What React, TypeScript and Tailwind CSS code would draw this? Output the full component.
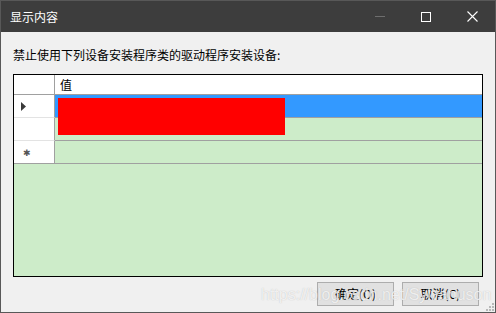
import React from "react";

const font = "font-['Microsoft_YaHei','Noto_Sans_CJK_SC',sans-serif]";

function TitleBar() {
    return (
        <div className="h-[31px] flex items-center pl-[9px] text-white text-[12px] shrink-0">
            <span className="flex-1">显示内容</span>
            <div className="flex items-center h-full">
                <div className="w-[46px] h-full flex items-center justify-center">
                    <div className="w-[10px] h-px bg-[#6e6e6e]" />
                </div>
                <div className="w-[46px] h-full flex items-center justify-center">
                    <div className="w-[10px] h-[10px] border border-white" />
                </div>
                <div className="w-[46px] h-full flex items-center justify-center">
                    <svg width="11" height="11" viewBox="0 0 11 11">
                        <path d="M0.5 0.5 L10.5 10.5 M10.5 0.5 L0.5 10.5" stroke="#ffffff" strokeWidth="1.1" />
                    </svg>
                </div>
            </div>
        </div>
    );
}

function RowHead({ children, last }: { children?: React.ReactNode; last?: boolean }) {
    return (
        <div className={`w-[41px] h-[23px] shrink-0 bg-white border-r border-[#a0a0a0] flex items-center ${last ? "border-b border-b-[#a0a0a0]" : "border-b border-b-[#e3e3e3]"}`}>
            {children}
        </div>
    );
}

function Grid() {
    return (
        <div className="relative flex-1 border border-black bg-[#cdecc9] flex flex-col">
            <div className="flex h-[20px] bg-white border-b border-[#a0a0a0]">
                <div className="w-[41px] border-r border-[#a0a0a0]" />
                <div className="flex-1 pl-[5px] flex items-center text-black">值</div>
            </div>
            <div className="flex">
                <RowHead>
                    <svg width="6" height="9" viewBox="0 0 6 9" className="ml-[7px]">
                        <path d="M0 0 L5 4.5 L0 9 Z" fill="#3a3a3a" />
                    </svg>
                </RowHead>
                <div className="flex-1 h-[23px] bg-[#3399ff] border-b border-[#a0a0a0]" />
            </div>
            <div className="flex">
                <RowHead />
                <div className="flex-1 h-[23px] border-b border-[#a0a0a0]" />
            </div>
            <div className="flex">
                <RowHead last>
                    <span className="ml-[9px] text-[#555] text-[9px] leading-none">✱</span>
                </RowHead>
                <div className="flex-1 h-[23px] border-b border-[#a0a0a0]" />
            </div>
            <div className="absolute left-[44px] top-[23px] w-[227px] h-[37px] bg-[#ff0000]" />
        </div>
    );
}

function Button({ label }: { label: string }) {
    return (
        <div className="w-[77px] h-[24px] bg-[#e1e1e1] border border-[#adadad] flex items-center justify-center text-black">
            {label}
        </div>
    );
}

export default function App() {
    return (
        <div className={`w-[496px] h-[313px] bg-[#3d3d3d] border border-[#585858] flex flex-col text-[12px] ${font}`}>
            <TitleBar />
            <div className="relative flex-1 bg-[#f0f0f0] flex flex-col pl-[12px] pr-[12px] pt-[15px] pb-[6px]">
                <div className="h-[16px] leading-[16px] text-black">禁止使用下列设备安装程序类的驱动程序安装设备:</div>
                <div className="mt-[11px] flex-1 flex flex-col">
                    <Grid />
                </div>
                <div className="flex justify-end gap-[8px] mt-[5px] pr-[4px]">
                    <Button label="确定(O)" />
                    <Button label="取消(C)" />
                </div>
                <div className="absolute left-[260px] bottom-[9px] text-[16px] leading-none font-['Liberation_Sans',sans-serif] text-white/75 [text-shadow:0_0_1px_rgba(140,140,140,0.5)] pointer-events-none whitespace-nowrap">
                    https://blog.csdn.net/Sylvanuson
                </div>
                <div className="absolute right-[1px] bottom-[1px] grid grid-cols-3 gap-px">
                    <div />
                    <div />
                    <div className="w-[2px] h-[2px] bg-[#b8b8b8]" />
                    <div />
                    <div className="w-[2px] h-[2px] bg-[#b8b8b8]" />
                    <div className="w-[2px] h-[2px] bg-[#b8b8b8]" />
                    <div className="w-[2px] h-[2px] bg-[#b8b8b8]" />
                    <div className="w-[2px] h-[2px] bg-[#b8b8b8]" />
                    <div className="w-[2px] h-[2px] bg-[#b8b8b8]" />
                </div>
            </div>
        </div>
    );
}
